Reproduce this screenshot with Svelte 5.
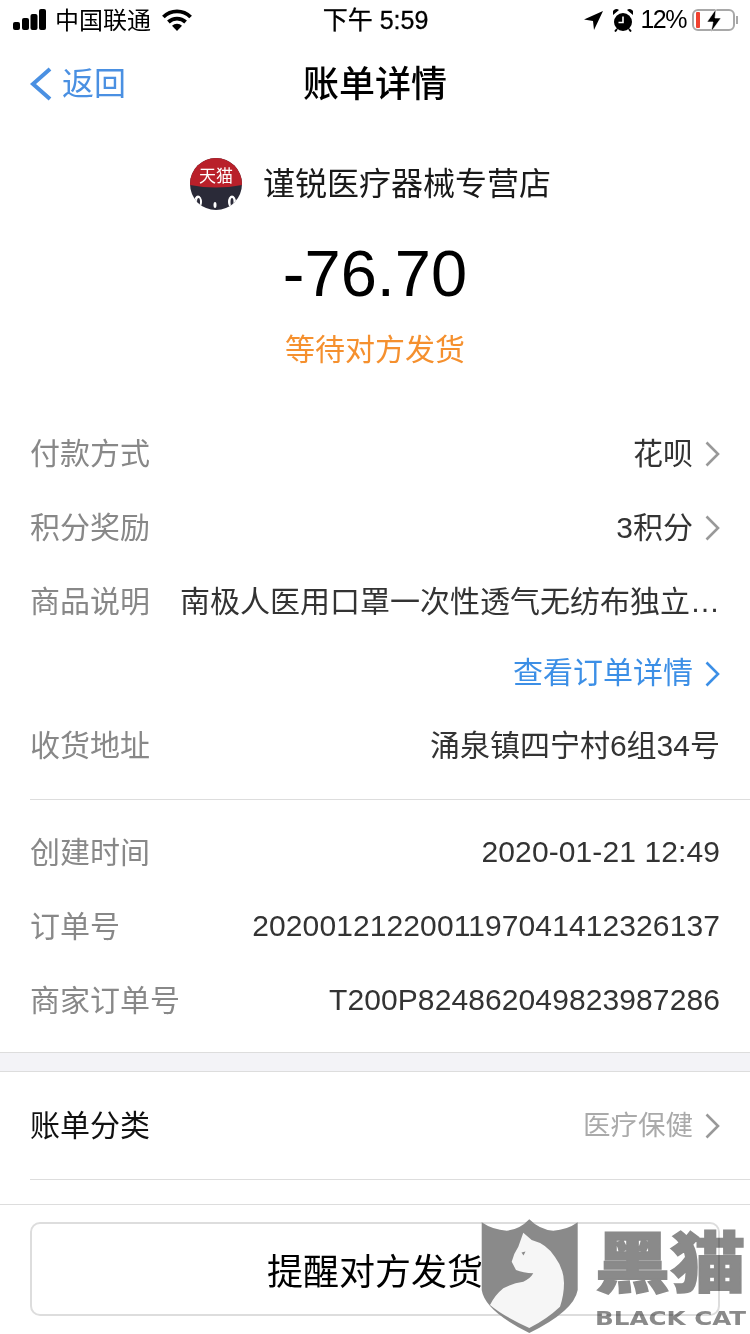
<script>
  const top = [
    { label: "付款方式", value: "花呗", arrow: true },
    { label: "积分奖励", value: "3积分", arrow: true },
    { label: "商品说明", value: "南极人医用口罩一次性透气无纺布独立…" },
  ];
  const times = [
    { label: "创建时间", value: "2020-01-21 12:49" },
    { label: "订单号", value: "2020012122001197041412326137" },
    { label: "商家订单号", value: "T200P824862049823987286" },
  ];
</script>

{#snippet chevron()}
  <svg class="chev" width="15" height="26" viewBox="0 0 15 26">
    <path d="M1.500 1.500L13 13 1.500 24.500" fill="none" stroke="currentColor" stroke-width="2.600" />
  </svg>
{/snippet}

<div class="page">
  <header class="status">
    <div class="side">
      <svg class="signal" width="33" height="21" viewBox="0 0 33 21">
        <rect x="0" y="13" width="7" height="8" rx="2" />
        <rect x="9" y="9" width="7" height="12" rx="2" />
        <rect x="17.500" y="5" width="7" height="16" rx="2" />
        <rect x="26" y="0" width="7" height="21" rx="2" />
      </svg>
      <span class="carrier">中国联通</span>
      <svg class="wifi" width="30" height="22" viewBox="0 0 30 22">
        <path d="M1.400 8a19.500 19.500 0 0 1 27.200 0" fill="none" stroke="#000" stroke-width="3.800" />
        <path d="M6.400 13a12.500 12.500 0 0 1 17.200 0" fill="none" stroke="#000" stroke-width="3.800" />
        <path d="M10 16.800a7 7 0 0 1 10 0L15 22z" />
      </svg>
    </div>
    <div class="time">下午 5:59</div>
    <div class="side right">
      <svg width="19" height="19" viewBox="0 0 19 19"><path d="M19 0L0 8.500l9 1.500 1 9z" /></svg>
      <svg class="alarm" width="20" height="23" viewBox="0 0 20 23">
        <circle cx="10" cy="13" r="9" />
        <path d="M0 6a4 4 0 0 1 6-5zM20 6a4 4 0 0 0-6-5z" />
        <path d="M10 7.500v6H5.500" fill="none" stroke="#fff" stroke-width="1.600" />
        <path d="M4 20l-2 2.500M16 20l2 2.500" stroke="#000" stroke-width="2" />
      </svg>
      <span class="pct">12%</span>
      <div class="battery">
        <span class="level"></span>
        <svg class="bolt" width="16" height="23" viewBox="0 0 16 23">
          <path d="M10 0L1 13h6L5 23 15 9H9z" stroke="#fff" stroke-width="0.600" />
        </svg>
      </div>
      <span class="nub"></span>
    </div>
  </header>

  <nav class="nav">
    <div class="back">
      <svg width="24" height="34" viewBox="0 0 24 34">
        <path d="M21 2L4 17l17 15" fill="none" stroke="#4a90e2" stroke-width="4" />
      </svg>
      <span class="up">返回</span>
    </div>
    <h1 class="up">账单详情</h1>
  </nav>

  <section class="summary">
    <div class="store">
      <div class="avatar">
        <svg width="52" height="52" viewBox="0 0 52 52">
          <defs><clipPath id="av"><circle cx="26" cy="26" r="26" /></clipPath></defs>
          <g clip-path="url(#av)">
            <rect width="52" height="52" fill="#2a2a38" />
            <path d="M0 0h52v27q-26 5-52 0z" fill="#b9202a" />
            <ellipse cx="8" cy="44" rx="4" ry="6.500" fill="#fff" />
            <ellipse cx="8.500" cy="44" rx="1.500" ry="4" fill="#2a2a38" />
            <ellipse cx="42" cy="44" rx="4" ry="6.500" fill="#fff" />
            <ellipse cx="42" cy="44" rx="1.500" ry="4" fill="#2a2a38" />
            <ellipse cx="25" cy="47" rx="1.500" ry="3" fill="#fff" />
          </g>
        </svg>
        <span class="tmall">天猫</span>
      </div>
      <span class="store-name up">谨锐医疗器械专营店</span>
    </div>
    <div class="amount">-76.70</div>
    <div class="state">等待对方发货</div>
  </section>

  <section class="rows">
    {#each top as r}
      <div class="row">
        <span class="label up">{r.label}</span>
        <span class="value up">{r.value}</span>
        {#if r.arrow}{@render chevron()}{/if}
      </div>
    {/each}
    <div class="link">
      <span class="link-text">查看订单详情</span>
      {@render chevron()}
    </div>
    <div class="row">
      <span class="label up">收货地址</span>
      <span class="value up">涌泉镇四宁村6组34号</span>
    </div>
  </section>

  <section class="rows times">
    {#each times as r}
      <div class="row">
        <span class="label up">{r.label}</span>
        <span class="value num">{r.value}</span>
      </div>
    {/each}
  </section>

  <div class="band"></div>

  <section class="category">
    <div class="cat-row">
      <span class="cat-label up">账单分类</span>
      <span class="cat-value up">医疗保健</span>
      {@render chevron()}
    </div>
  </section>

  <footer class="foot">
    <button type="button" class="remind">提醒对方发货</button>
  </footer>

  <!-- watermark sits over the button -->
  <div class="mark">
    <svg class="shield" width="98" height="115" viewBox="0 0 98 115">
      <path d="M0.700 3.300Q12 11 25.700 11.700Q38 11 48.300 0.300Q59 11 72.300 11.700Q86 11 96.700 3.300V71Q93 92 48.300 114Q4 92 0.700 71z" fill="#8a8a8a" />
      <path d="M42.300 13.700L50.700 21Q66 25 74 38Q83 50 83 64Q83 76 79 87.700Q66 100 48.300 109Q22 97 9 86Q14 76 22.300 69.300Q32 64 42.300 62.700Q49 60 52.300 54.300Q42 54 35 51L30.700 42.700Q33 34 37.300 27.700z" fill="#fff" fill-opacity="0.92" />
      <path d="M40.500 33.500l4-1-2 4z" fill="#8a8a8a" />
    </svg>
    <div class="brand">
      <span class="brand-cn">黑猫</span>
      <span class="brand-en">BLACK CAT</span>
    </div>
  </div>
</div>

<style>
  :global(body) {
    margin: 0;
    background: #fff;
  }
  .page {
    position: relative;
    width: 750px;
    height: 1334px;
    overflow: hidden;
    background: #fff;
    color: #000;
    font-family: "Liberation Sans", "Noto Sans CJK SC", sans-serif;
  }
  /* CJK glyphs sit low in the Liberation line box, this centres them */
  .up {
    padding-bottom: 6px;
  }
  .status {
    display: flex;
    justify-content: space-between;
    align-items: center;
    height: 40px;
    padding: 0 12px 0 13px;
  }
  .side {
    display: flex;
    align-items: center;
    gap: 9px;
    width: 240px;
  }
  .side svg {
    flex: none;
  }
  .side.right {
    justify-content: flex-end;
    gap: 10px;
  }
  .signal {
    margin-bottom: 2px;
  }
  .alarm {
    margin-right: -3px;
  }
  .carrier {
    font-size: 24px;
    padding-bottom: 4px;
  }
  .wifi {
    margin-left: 2px;
  }
  .time {
    font-size: 25px;
    padding-bottom: 4px;
    -webkit-text-stroke: 0.3px #000;
  }
  .pct {
    font-size: 25px;
    letter-spacing: -1.500px;
    padding-bottom: 2px;
    margin-right: -4px;
  }
  .battery {
    position: relative;
    width: 43px;
    height: 22px;
    border: 2px solid #a8a8a8;
    border-radius: 6px;
    box-sizing: border-box;
  }
  .level {
    position: absolute;
    left: 2px;
    top: 1px;
    width: 4px;
    height: 16px;
    background: #f0412f;
    border-radius: 1px;
  }
  .bolt {
    position: absolute;
    left: 12px;
    top: -2px;
  }
  .nub {
    width: 2px;
    height: 8px;
    background: #a8a8a8;
    margin-left: -9px;
  }
  .nav {
    position: relative;
    display: flex;
    align-items: center;
    justify-content: center;
    height: 88px;
  }
  .back {
    position: absolute;
    left: 29px;
    top: 0;
    bottom: 0;
    display: flex;
    align-items: center;
    gap: 9px;
    color: #4a90e2;
    font-size: 32px;
  }
  h1 {
    margin: 0;
    font-size: 36px;
    font-weight: 500;
  }
  .summary {
    display: flex;
    flex-direction: column;
    align-items: center;
    height: 289px;
  }
  .store {
    display: flex;
    align-items: center;
    gap: 21px;
    height: 52px;
    margin: 30px 9px 0 0;
  }
  .avatar {
    position: relative;
    width: 52px;
    height: 52px;
  }
  .tmall {
    position: absolute;
    left: 0;
    right: 0;
    top: 9px;
    text-align: center;
    color: #fff;
    font-size: 17px;
    line-height: 20px;
  }
  .store-name {
    font-size: 32px;
    color: #1a1a1a;
  }
  .amount {
    font-size: 65px;
    line-height: 76px;
    margin-top: 26px;
  }
  .state {
    font-size: 30px;
    line-height: 40px;
    margin-top: 18px;
    color: #f5902e;
  }
  .rows {
    padding: 0 30px;
  }
  .row {
    display: flex;
    align-items: center;
    height: 74px;
    font-size: 30px;
  }
  .label {
    flex: none;
    color: #888;
  }
  .value {
    flex: 1;
    text-align: right;
    white-space: nowrap;
    color: #333;
    font-size: 30px;
  }
  .value.num {
    padding-bottom: 2px;
    letter-spacing: 0.1px;
  }
  .chev {
    flex: none;
    margin-left: 12px;
    color: #999;
  }
  .link {
    display: flex;
    align-items: center;
    justify-content: flex-end;
    height: 70px;
    color: #3c8fe6;
    font-size: 30px;
  }
  .link-text {
    padding-bottom: 8px;
  }
  .link .chev {
    color: #3c8fe6;
  }
  .times {
    margin: 16px 0 14px 30px;
    padding: 16px 30px 0 0;
    border-top: 1px solid #ddd;
  }
  .band {
    height: 18px;
    background: #f3f3f7;
    border-top: 1px solid #ddd;
    border-bottom: 1px solid #ddd;
  }
  .category {
    margin-left: 30px;
    padding-right: 30px;
    height: 107px;
    border-bottom: 1px solid #ddd;
  }
  .cat-row {
    display: flex;
    align-items: center;
    height: 107px;
  }
  .cat-label {
    font-size: 30px;
    color: #111;
  }
  .cat-value {
    flex: 1;
    text-align: right;
    font-size: 27.500px;
    color: #aaa;
  }
  .foot {
    margin-top: 24px;
    padding: 17px 30px 0;
    border-top: 1px solid #ddd;
  }
  .remind {
    display: block;
    width: 100%;
    height: 94px;
    background: #fff;
    border: 2px solid #ddd;
    border-radius: 10px;
    font-family: inherit;
    font-size: 36px;
    color: #000;
    padding: 0;
  }
  .mark {
    position: absolute;
    left: 481px;
    top: 1219px;
    display: flex;
    gap: 16px;
  }
  .brand {
    display: flex;
    flex-direction: column;
    color: #8a8a8a;
    mix-blend-mode: multiply;
  }
  .brand-cn {
    font-size: 66px;
    line-height: 80px;
    font-weight: 900;
    margin-top: 5px;
    white-space: nowrap;
    transform: scaleX(1.14);
    transform-origin: left;
    -webkit-text-stroke: 1.500px #8a8a8a;
  }
  .brand-en {
    font-size: 20px;
    line-height: 24px;
    font-weight: 700;
    font-family: "DejaVu Sans", sans-serif;
    margin-top: 2px;
    white-space: nowrap;
    transform: scaleX(1.23);
    transform-origin: left;
  }
</style>
